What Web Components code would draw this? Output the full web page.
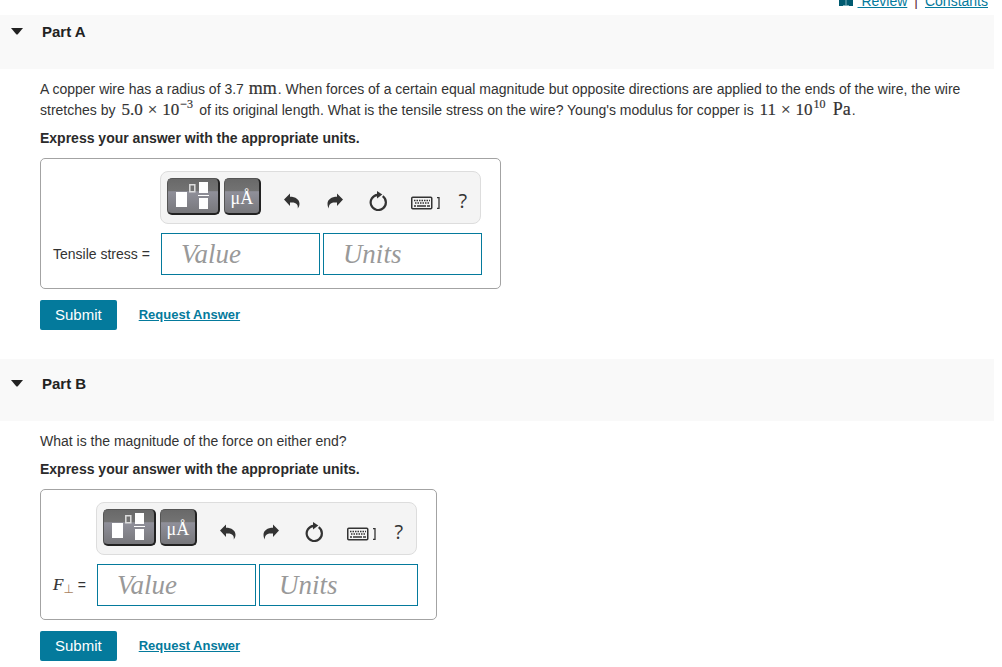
<!DOCTYPE html>
<html lang="en">
<head>
<meta charset="utf-8">
<title>Tensile stress problem</title>
<style>
  html { background: #fff; }
  body { margin: 0; font: 14px/21px "Liberation Sans", Arial, sans-serif; color: #333; }
</style>
</head>
<body>
<problem-page>
  <resource-bar slot="resources"></resource-bar>
  <problem-part heading="Part A" tucked>
    <p>A copper wire has a radius of 3.7 <math-text>mm</math-text>. When forces of a certain equal magnitude but opposite directions are applied to the ends of the wire, the wire<br>stretches by <sci-number base="5.0" power="−3"></sci-number> of its original length. What is the tensile stress on the wire? Young's modulus for copper is <sci-number base="11" power="10"></sci-number> <math-text>Pa</math-text>.</p>
    <answer-box slot="answer"><span slot="label">Tensile stress =</span></answer-box>
  </problem-part>
  <problem-part heading="Part B">
    <p>What is the magnitude of the force on either end?</p>
    <answer-box slot="answer"><force-symbol slot="label"></force-symbol></answer-box>
  </problem-part>
</problem-page>

<script>
const define = (name, markup, setup) => {
  const template = document.createElement('template');
  template.innerHTML = markup;
  customElements.define(name, class extends HTMLElement {
    constructor() {
      super();
      this.attachShadow({ mode: 'open' }).append(template.content.cloneNode(true));
    }
    connectedCallback() { if (setup) setup(this, this.shadowRoot); }
  });
};

define('problem-page', `
  <style>
    :host { display: block; padding-right: 8px; }
  </style>
  <slot name="resources"></slot>
  <main><slot></slot></main>
`);

define('resource-bar', `
  <style>
    :host { display: flex; justify-content: flex-end; align-items: flex-end;
            height: 15px; padding-right: 6px; overflow: hidden; color: #5c2b3c; }
    nav { display: flex; gap: 7px; height: 22px; line-height: 16px; white-space: pre; }
    a { color: #047a9c; text-decoration: underline; text-underline-offset: 1px; }
    .book { margin-right: -2px; }
    .book svg { display: block; }
  </style>
  <nav aria-label="Resources">
    <span class="book"><svg width="14" height="13" viewBox="0 0 14 13" aria-hidden="true"><path fill="#005a70" d="M0 0h14v13H0z"/><path stroke="#7fb1bd" d="M7 0v12M4 12.500h6"/></svg></span>
    <a href="#review"> Review</a><span>|</span><a href="#constants">Constants</a>
  </nav>
`);

define('math-text', `
  <style>
    :host { display: inline; font: 18px/1 "Liberation Serif", "Times New Roman", serif; margin: 0 1px; -webkit-text-stroke: 0.2px; }
  </style>
  <slot></slot>`);

define('sci-number', `
  <style>
    :host { display: inline; font: 17px/1 "Liberation Serif", "Times New Roman", serif; white-space: nowrap; margin: 0 2px; -webkit-text-stroke: 0.2px; }
    .times { margin: 0 5px; }
    sup { font-size: 12px; line-height: 0; vertical-align: 7px; margin-left: 1px; }
  </style>
  <span class="base"></span><span class="times">×</span><span>10</span><sup></sup>
`, (host, root) => {
  root.querySelector('.base').textContent = host.getAttribute('base');
  root.querySelector('sup').textContent = host.getAttribute('power');
});

define('force-symbol', `
  <style>
    :host { display: inline; }
    i { font: italic 17px/1 "Liberation Serif", "Times New Roman", serif; -webkit-text-stroke: 0.2px; }
    sub { font: 12px/0 "DejaVu Sans", sans-serif; color: #a87f5e; vertical-align: -3px; }
  </style>
  <i>F</i><sub>⊥</sub> =
`);

define('problem-part', `
  <style>
    :host { display: block; --head-top: 14px; }
    :host([tucked]) { --head-top: 6px; }
    header { display: flex; align-items: flex-start; gap: 19px; padding: var(--head-top) 11px 27px; background: #f9f9f9; }
    h2 { margin: 0; font-size: 15px; line-height: 21px; color: #222; }
    button.toggle { border: 0; padding: 7px 0; background: none; line-height: 0; color: #222; }
    .body { padding: 10px 0 29px 40px; }
    ::slotted(p) { margin: 0 0 7px; }
    .hint { margin: 0 0 9px; font-weight: bold; color: #2b2b2b; }
    .actions { display: flex; align-items: center; gap: 22px; margin-top: 11px; }
    .submit { height: 30px; padding: 0 15px; border: 0; border-radius: 2px; background: #047a9c; color: #fff; font: 15px/30px "Liberation Sans", Arial, sans-serif; }
    a { color: #047a9c; font-weight: bold; font-size: 13px; line-height: 20px; text-underline-offset: 1px; }
  </style>
  <section>
    <header>
      <button class="toggle" aria-label="Toggle part"><svg width="12" height="7" viewBox="0 0 12 7" aria-hidden="true"><path fill="currentColor" d="M0 0h12L7 6q-1 1-2 0z"/></svg></button>
      <h2></h2>
    </header>
    <div class="body">
      <slot></slot>
      <p class="hint">Express your answer with the appropriate units.</p>
      <slot name="answer"></slot>
      <div class="actions"><button class="submit">Submit</button><a href="#answer">Request Answer</a></div>
    </div>
  </section>
`, (host, root) => { root.querySelector('h2').textContent = host.getAttribute('heading'); });

define('answer-box', `
  <style>
    :host { display: grid; grid-template-columns: auto auto; justify-content: start; align-items: center; width: fit-content;
            column-gap: 10px; row-gap: 9px; box-sizing: border-box; padding: 12px 18px 13px 12px; border: 1px solid #a3a3a3; border-radius: 5px; }
    math-toolbar { grid-column: 2; }
    label { white-space: nowrap; }
    .fields { display: flex; gap: 3px; padding-left: 1px; }
    input { box-sizing: border-box; width: 159px; height: 42px; margin: 0; padding: 0 19px; border: 1px solid #047a9c; border-radius: 0; background: #fff;
            font: italic 27px "Liberation Serif", "Times New Roman", serif; color: #333; }
    input::placeholder { color: #999; opacity: 1; }
  </style>
  <math-toolbar></math-toolbar>
  <label for="value"><slot name="label"></slot></label>
  <div class="fields">
    <input id="value" placeholder="Value">
    <input aria-label="Units" placeholder="Units">
  </div>
`);

define('math-toolbar', `
  <style>
    :host { display: flex; align-items: flex-start; box-sizing: border-box; width: 321px; height: 53px; padding: 6px; border: 1px solid #ddd; border-radius: 8px; background: #f4f4f4; }
    button { flex: none; box-sizing: border-box; padding: 0; margin: 0; color: #333; font: 20px/24px "Open Sans", "Liberation Sans", sans-serif; }
    .key { height: 37px; margin-right: 4px; border: 1px solid #555; border-right: 2px solid #222; border-bottom: 2px solid #222; border-radius: 5px;
           background: linear-gradient(#696969 0, #737373 36%, #90909a 37%, #77777b 100%); color: #fff; }
    .wide { width: 53px; }
    .unit { width: 37px; padding-top: 3px; font: 18px/30px "Liberation Serif", "Times New Roman", serif; }
    .plain { width: 43px; height: 46px; border: 0; background: none; }
    .tools { display: flex; flex: none; margin-left: 6px; }
    .keyboard { width: 52px; padding-top: 4px; }
    .help { width: 22px; }
    svg { display: block; margin: auto; }
  </style>
  <button class="key wide" aria-label="Templates"><svg width="34" height="30" viewBox="0 0 34 30"><path fill="#fff" d="M0 11h11v15H0zM23 1h9v11h-9zM23 17h9v11h-9zM22 14h11v1H22z"/><path fill="none" stroke="#ddd" stroke-width="1.500" d="M13.800 3.800h5v7h-5z"/></svg></button>
  <button class="key unit" aria-label="Symbols">μÅ</button>
  <div class="tools">
    <button class="plain" aria-label="Undo"><svg width="16" height="16" viewBox="0 0 16 16"><path fill="#333" d="M0 6.500 6 .5v3.300c5.500 0 9.500 2.700 9.500 7 0 2-.8 3.600-1.800 4.700.8-3.500-1.400-6.200-6.200-6H6v3.500z"/></svg></button>
    <button class="plain" aria-label="Redo"><svg width="16" height="16" viewBox="0 0 16 16"><path fill="#333" d="M16 6.500 10 .5v3.300C4.500 3.800.5 6.500.5 10.800c0 2 .6 3.600 1.400 4.700-.4-3.500 1.600-6.200 6.100-6h2V13z"/></svg></button>
    <button class="plain" aria-label="Reset"><svg width="18" height="20" viewBox="0 0 18 20"><path fill="none" stroke="#333" stroke-width="2.200" d="M13.700 5.200a7.600 7.600 0 1 1-5-1.400"/><path fill="#333" d="M8 0l5.300 3.500L8 7.500z"/></svg></button>
    <button class="plain keyboard" aria-label="Keyboard shortcuts"><svg width="30" height="14" viewBox="0 0 30 14"><rect x=".75" y="1.250" width="20" height="11.500" rx="1" fill="#f4f4f4" stroke="#333" stroke-width="1.500"/><path stroke="#333" stroke-width="1.500" stroke-dasharray="1.500 1" d="M3 4.500h16M4 7h15"/><path stroke="#333" stroke-width="1.500" d="M3 10h2m1 0h9m1 0h3"/><path fill="none" stroke="#333" stroke-width="1.300" d="M26 1.700h2v10.600h-2"/></svg></button>
    <button class="plain help" aria-label="Help">?</button>
  </div>
`);
</script>
</body>
</html>
